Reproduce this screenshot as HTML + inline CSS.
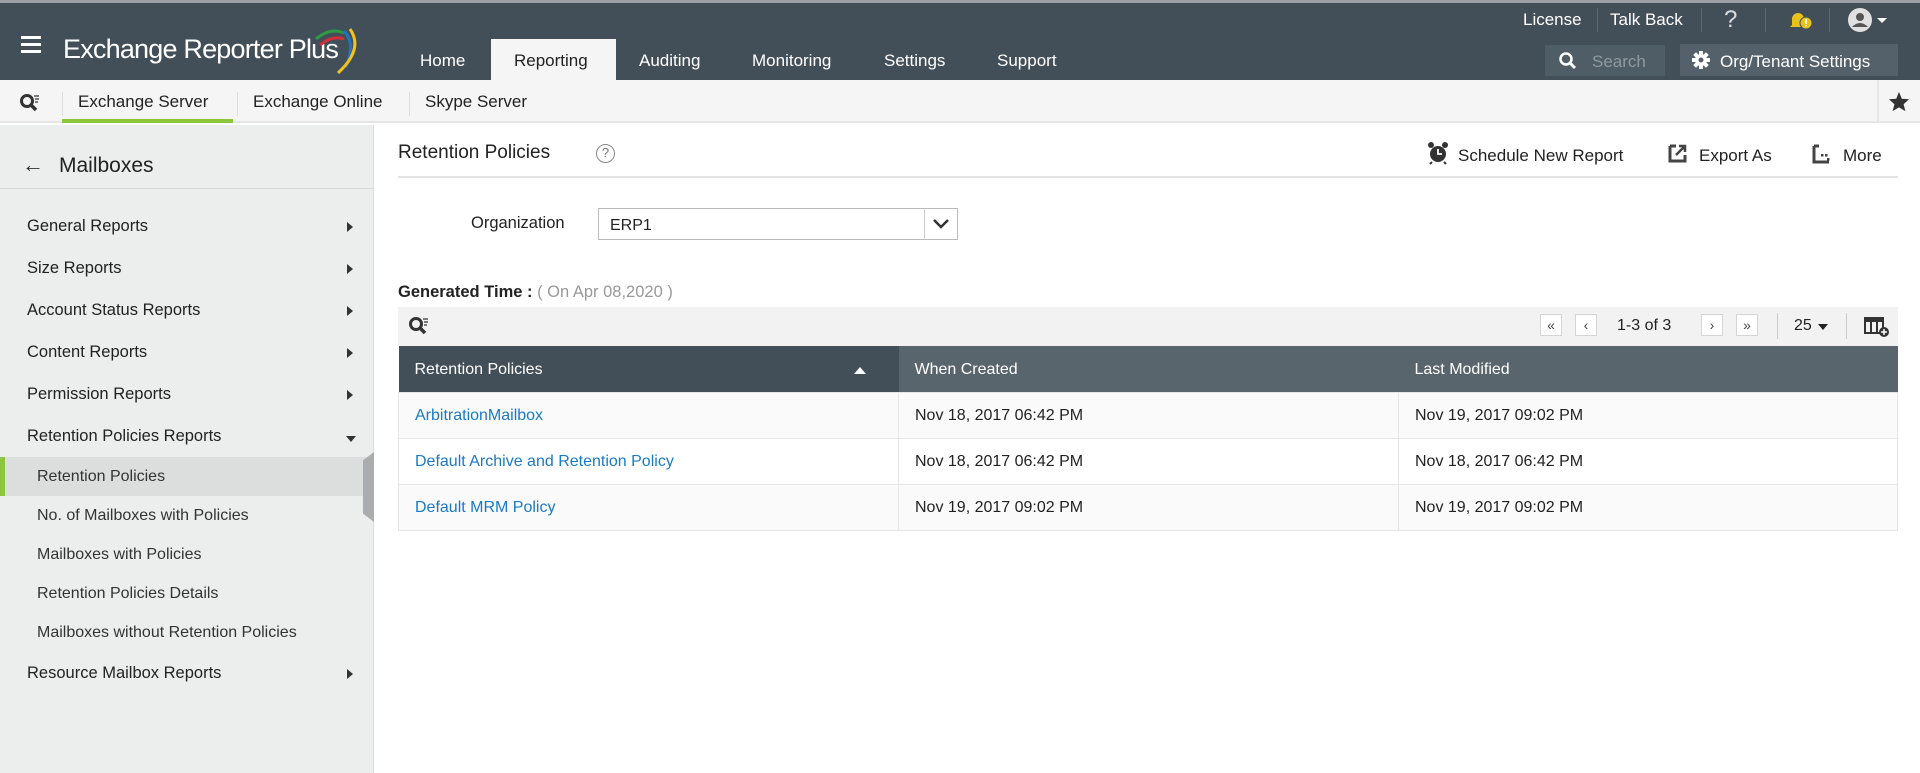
<!DOCTYPE html>
<html><head><meta charset="utf-8"><style>
*{margin:0;padding:0;box-sizing:border-box}
body{width:1920px;height:773px;overflow:hidden;font-family:"Liberation Sans","DejaVu Sans",sans-serif;font-size:16px;color:#222;background:#fff;position:relative}
.a{position:absolute;white-space:nowrap}
#top{position:absolute;left:0;top:0;width:1920px;height:80px;background:#434f58;border-top:3px solid #9aa0a5}
.nav{color:#fff;font-size:17px;top:51px}
.sub{font-size:17px;color:#222;top:92px}
.side{font-size:16.5px;color:#222;left:27px}
.subit{font-size:16px;color:#333;left:37px}
.arr{position:absolute;width:0;height:0;border-top:5px solid transparent;border-bottom:5px solid transparent;border-left:6px solid #333}
.arrd{position:absolute;width:0;height:0;border-left:5px solid transparent;border-right:5px solid transparent;border-top:6px solid #333}
.pg{position:absolute;top:314px;width:22px;height:22px;border:1px solid #d5d5d5;background:#fff;font-size:14px;text-align:center;line-height:20px;color:#444}
td{height:46px;border:1px solid #e6e6e6;padding-left:16px;font-size:16px;padding-top:2px}
</style></head><body>
<div id="top"></div>
<div class="a" style="left:21px;top:36px;width:20px;height:3px;background:#fff"></div>
<div class="a" style="left:21px;top:43px;width:20px;height:3px;background:#fff"></div>
<div class="a" style="left:21px;top:50px;width:20px;height:3px;background:#fff"></div>
<div class="a" style="left:63px;top:34px;color:#fff;font-size:27px;letter-spacing:-0.8px">Exchange Reporter Plus</div>
<svg class="a" style="left:314px;top:27px" width="48" height="50" viewBox="0 0 48 50">
<path d="M2 12 Q16 0 30 6" stroke="#2e9a45" stroke-width="3" fill="none"/>
<path d="M6 18 Q18 8 30 12" stroke="#d42e3b" stroke-width="3" fill="none"/>
<path d="M30 4 Q42 16 32 40" stroke="#1f74c2" stroke-width="3" fill="none"/>
<path d="M36 2 Q50 22 24 46" stroke="#f3c31c" stroke-width="3" fill="none"/>
</svg>
<div class="a" style="left:491px;top:39px;width:125px;height:41px;background:#f5f5f5"></div>
<div class="a nav" style="left:420px">Home</div>
<div class="a nav" style="left:514px;color:#222">Reporting</div>
<div class="a nav" style="left:639px">Auditing</div>
<div class="a nav" style="left:752px">Monitoring</div>
<div class="a nav" style="left:884px">Settings</div>
<div class="a nav" style="left:997px">Support</div>
<div class="a" style="left:1523px;top:10px;color:#fff;font-size:17px">License</div>
<div class="a" style="left:1597px;top:8px;width:1px;height:24px;background:#5f6a73"></div>
<div class="a" style="left:1610px;top:10px;color:#fff;font-size:17px">Talk Back</div>
<div class="a" style="left:1701px;top:8px;width:1px;height:24px;background:#5f6a73"></div>
<div class="a" style="left:1724px;top:6px;color:#ddd;font-size:24px">?</div>
<div class="a" style="left:1765px;top:8px;width:1px;height:24px;background:#5f6a73"></div>
<svg class="a" style="left:1787px;top:10px" width="26" height="22"><path d="M3 17 L5 15 L5 9 A6 6 0 0 1 17 9 L17 15 L19 17Z" fill="#e8c21b"/><circle cx="19" cy="13" r="6" fill="#e8c21b" stroke="#434f58" stroke-width="1"/><rect x="18.3" y="9" width="1.6" height="5" fill="#fff"/><rect x="18.3" y="15" width="1.6" height="1.6" fill="#fff"/></svg>
<div class="a" style="left:1829px;top:8px;width:1px;height:24px;background:#5f6a73"></div>
<svg class="a" style="left:1847px;top:8px" width="46" height="26"><circle cx="13" cy="12" r="12" fill="#e0e0e0"/><circle cx="13" cy="9" r="4" fill="#555"/><path d="M5 19 Q13 11 21 19" fill="#555"/><path d="M30 10 L40 10 L35 15Z" fill="#fff"/></svg>
<div class="a" style="left:1545px;top:45px;width:120px;height:31px;background:#4f5d66"></div>
<svg class="a" style="left:1558px;top:51px" width="20" height="20"><circle cx="8" cy="8" r="5.5" stroke="#fff" stroke-width="2.5" fill="none"/><path d="M12 12 L17 17" stroke="#fff" stroke-width="3"/></svg>
<div class="a" style="left:1592px;top:52px;color:#8f999f;font-size:17px">Search</div>
<div class="a" style="left:1680px;top:44px;width:218px;height:32px;background:#55616a"></div>
<svg class="a" style="left:1691px;top:50px" width="20" height="20" viewBox="0 0 20 20"><g fill="#fff"><circle cx="10" cy="10" r="6"/><rect x="8" y="1" width="4" height="18"/><rect x="1" y="8" width="18" height="4"/><rect x="8" y="1" width="4" height="18" transform="rotate(45 10 10)"/><rect x="8" y="1" width="4" height="18" transform="rotate(-45 10 10)"/></g><circle cx="10" cy="10" r="2.5" fill="#55616a"/></svg>
<div class="a" style="left:1720px;top:52px;color:#fff;font-size:17px">Org/Tenant Settings</div>
<div class="a" style="left:0;top:80px;width:1920px;height:43px;background:#f5f5f5;border-bottom:2px solid #e5e5e5"></div>
<svg class="a" style="left:19px;top:93px" width="24" height="22"><circle cx="8" cy="8" r="5.5" stroke="#333" stroke-width="3" fill="none"/><path d="M12 12 L17 17" stroke="#333" stroke-width="3.5"/><path d="M15 3h5M16 6h4M16 9h3" stroke="#333" stroke-width="1.3"/></svg>
<div class="a" style="left:62px;top:92px;width:1px;height:24px;background:#ddd"></div>
<div class="a sub" style="left:78px">Exchange Server</div>
<div class="a" style="left:62px;top:119px;width:171px;height:4px;background:#8cc63f"></div>
<div class="a" style="left:237px;top:92px;width:1px;height:24px;background:#ddd"></div>
<div class="a sub" style="left:253px">Exchange Online</div>
<div class="a" style="left:409px;top:92px;width:1px;height:24px;background:#ddd"></div>
<div class="a sub" style="left:425px">Skype Server</div>
<div class="a" style="left:1877px;top:80px;width:43px;height:43px;border-left:2px solid #e5e5e5"></div>
<svg class="a" style="left:1888px;top:91px" width="22" height="21" viewBox="0 0 24 23"><path d="M12 1 L15 8.5 L23 9 L17 14.5 L19 22 L12 18 L5 22 L7 14.5 L1 9 L9 8.5Z" fill="#333"/></svg>
<div class="a" style="left:0;top:125px;width:374px;height:648px;background:#eceded;border-right:1px solid #ddd"></div>
<div class="a" style="left:22px;top:152px;font-size:22px;color:#333">←</div>
<div class="a" style="left:59px;top:154px;font-size:21px;color:#222">Mailboxes</div>
<div class="a" style="left:0;top:188px;width:374px;height:1px;background:#d8d8d8"></div>
<div class="a side" style="top:217px">General Reports</div><div class="arr" style="left:347px;top:222px"></div>
<div class="a side" style="top:259px">Size Reports</div><div class="arr" style="left:347px;top:264px"></div>
<div class="a side" style="top:301px">Account Status Reports</div><div class="arr" style="left:347px;top:306px"></div>
<div class="a side" style="top:343px">Content Reports</div><div class="arr" style="left:347px;top:348px"></div>
<div class="a side" style="top:385px">Permission Reports</div><div class="arr" style="left:347px;top:390px"></div>
<div class="a side" style="top:427px">Retention Policies Reports</div><div class="arrd" style="left:346px;top:436px"></div>
<div class="a" style="left:0;top:457px;width:374px;height:39px;background:#dcdddd"></div>
<div class="a" style="left:0;top:457px;width:5px;height:39px;background:#8cc63f"></div>
<div class="a" style="left:363px;top:452px;width:11px;height:70px;background:#a9adb0;clip-path:polygon(100% 0,100% 100%,0 88%,0 12%)"></div>
<div class="a subit" style="top:468px">Retention Policies</div>
<div class="a subit" style="top:507px">No. of Mailboxes with Policies</div>
<div class="a subit" style="top:546px">Mailboxes with Policies</div>
<div class="a subit" style="top:585px">Retention Policies Details</div>
<div class="a subit" style="top:624px">Mailboxes without Retention Policies</div>
<div class="a side" style="top:664px">Resource Mailbox Reports</div><div class="arr" style="left:347px;top:669px"></div>
<div class="a" style="left:398px;top:142px;font-size:19px;color:#222">Retention Policies</div>
<div class="a" style="left:596px;top:144px;width:19px;height:19px;border:1.5px solid #888;border-radius:50%;font-size:13px;color:#777;text-align:center;line-height:16px">?</div>
<svg class="a" style="left:1427px;top:141px" width="22" height="24" viewBox="0 0 22 24"><circle cx="11" cy="13" r="8" fill="#333"/><circle cx="4" cy="4" r="3" fill="#333"/><circle cx="18" cy="4" r="3" fill="#333"/><path d="M5 21 L3 23 M17 21 L19 23" stroke="#333" stroke-width="2"/><path d="M11 8 V13 H15" stroke="#fff" stroke-width="1.8" fill="none"/></svg>
<div class="a" style="left:1458px;top:146px;font-size:17px">Schedule New Report</div>
<svg class="a" style="left:1668px;top:143px" width="20" height="20"><path d="M2 3 V18 H17 V12" stroke="#444" stroke-width="3" fill="none"/><path d="M2 3 H8" stroke="#444" stroke-width="3"/><path d="M8 12 L16 4 M11 3 H17 V9" stroke="#444" stroke-width="2.5" fill="none"/></svg>
<div class="a" style="left:1699px;top:146px;font-size:17px">Export As</div>
<svg class="a" style="left:1812px;top:144px" width="20" height="20"><path d="M2 2 V18 H17" stroke="#444" stroke-width="3" fill="none"/><path d="M2 2 H7" stroke="#444" stroke-width="3"/><rect x="9" y="10" width="2.5" height="2.5" fill="#444"/><rect x="13" y="10" width="2.5" height="2.5" fill="#444"/><rect x="15" y="14" width="2.5" height="2.5" fill="#444"/></svg>
<div class="a" style="left:1843px;top:146px;font-size:17px">More</div>
<div class="a" style="left:398px;top:176px;width:1500px;height:2px;background:#e3e3e3"></div>
<div class="a" style="left:471px;top:214px;font-size:16.5px">Organization</div>
<div class="a" style="left:598px;top:208px;width:360px;height:32px;border:1px solid #bbb;background:#fff"></div>
<div class="a" style="left:610px;top:217px;font-size:16px">ERP1</div>
<div class="a" style="left:924px;top:209px;width:1px;height:30px;background:#ccc"></div>
<svg class="a" style="left:932px;top:218px" width="18" height="12"><path d="M2 2 L9 9 L16 2" stroke="#333" stroke-width="2.5" fill="none"/></svg>
<div class="a" style="left:398px;top:283px;font-size:16.5px;font-weight:bold">Generated Time : <span style="font-weight:normal;color:#999">( On Apr 08,2020 )</span></div>
<div class="a" style="left:398px;top:307px;width:1500px;height:39px;background:#f2f2f2"></div>
<svg class="a" style="left:408px;top:316px" width="24" height="22"><circle cx="8" cy="8" r="5.5" stroke="#333" stroke-width="3" fill="none"/><path d="M12 12 L17 17" stroke="#333" stroke-width="3.5"/><path d="M15 3h5M16 6h4M16 9h3" stroke="#333" stroke-width="1.3"/></svg>
<div class="pg" style="left:1540px">«</div>
<div class="pg" style="left:1575px">‹</div>
<div class="a" style="left:1617px;top:317px;font-size:16px">1-3 of 3</div>
<div class="pg" style="left:1701px">›</div>
<div class="pg" style="left:1736px">»</div>
<div class="a" style="left:1777px;top:313px;width:1px;height:26px;background:#ccc"></div>
<div class="a" style="left:1794px;top:317px;font-size:16px">25</div>
<div class="arrd" style="left:1818px;top:324px;border-top-color:#222"></div>
<div class="a" style="left:1846px;top:313px;width:1px;height:26px;background:#ccc"></div>
<svg class="a" style="left:1864px;top:316px" width="26" height="22"><rect x="1" y="2" width="18" height="15" fill="none" stroke="#333" stroke-width="2"/><rect x="1" y="2" width="18" height="4" fill="#333"/><path d="M7 6V17M13 6V17" stroke="#333" stroke-width="2"/><circle cx="20" cy="16" r="5" fill="#333"/><path d="M17 16h6M20 13v6" stroke="#fff" stroke-width="1.5"/></svg>
<table class="a" style="left:398px;top:346px;width:1500px;border-collapse:collapse;table-layout:fixed">
<tr style="background:#434f58;color:#fff"><td style="width:500px;border:none;position:relative">Retention Policies<span style="position:absolute;left:455px;top:21px;width:0;height:0;border-left:6px solid transparent;border-right:6px solid transparent;border-bottom:7px solid #fff"></span></td><td style="width:500px;border:none;background:#59656d">When Created</td><td style="border:none;background:#59656d">Last Modified</td></tr>
<tr style="background:#fafafa"><td style="color:#1a7ac4">ArbitrationMailbox</td><td>Nov 18, 2017 06:42 PM</td><td>Nov 19, 2017 09:02 PM</td></tr>
<tr><td style="color:#1a7ac4">Default Archive and Retention Policy</td><td>Nov 18, 2017 06:42 PM</td><td>Nov 18, 2017 06:42 PM</td></tr>
<tr style="background:#fafafa"><td style="color:#1a7ac4">Default MRM Policy</td><td>Nov 19, 2017 09:02 PM</td><td>Nov 19, 2017 09:02 PM</td></tr>
</table>
</body></html>
